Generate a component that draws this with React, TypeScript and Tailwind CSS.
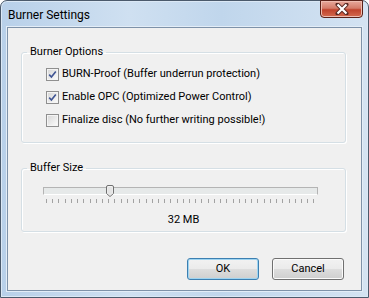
import React, { useState } from 'react';

const Checkbox: React.FC<{ checked: boolean; label: string; onToggle: () => void }> = ({ checked, label, onToggle }) => (
  <label className="flex h-[14px] cursor-default items-center gap-[3px]" onClick={onToggle}>
    <span className="flex h-[13px] w-[13px] shrink-0 items-center justify-center border border-[#8f8f8f] bg-white">
      <span className="flex h-[11px] w-[11px] items-center justify-center border border-[#f4f4f4] bg-gradient-to-br from-[#d9d9d9] to-[#f9f9f9]">
        {checked && (
          <svg width="9" height="9" viewBox="0 0 9 9">
            <path d="M1.2 4.6 L3.4 7 L7.8 1.4" fill="none" stroke="#3f5493" strokeWidth="1.6" />
          </svg>
        )}
      </span>
    </span>
    <span className="text-[11px] leading-[14px] text-black">{label}</span>
  </label>
);

const GroupBox: React.FC<{ title: string; className: string; children: React.ReactNode }> = ({ title, className, children }) => (
  <fieldset className={`rounded-[3px] border border-[#d5dfe5] shadow-[inset_1px_1px_0_#fff,1px_1px_0_#fff] ${className}`}>
    <legend className="ml-[5px] px-[3px] text-[11px] leading-[14px] text-black">{title}</legend>
    {children}
  </fieldset>
);

const Button: React.FC<{ label: string; focused?: boolean }> = ({ label, focused }) => (
  <button
    className={`h-[22px] w-[72px] rounded-[3px] border text-[11px] leading-[14px] text-black bg-[linear-gradient(#f2f2f2_0%,#ebebeb_48%,#dddddd_52%,#cfcfcf_100%)] ${
      focused ? 'border-[#3c7fb1] shadow-[inset_0_0_0_1px_#9ed4f1]' : 'border-[#707070] shadow-[inset_0_0_0_1px_#fbfbfb]'
    }`}
  >
    {label}
  </button>
);

const App: React.FC = () => {
  const [burnProof, setBurnProof] = useState(true);
  const [opc, setOpc] = useState(true);
  const [finalize, setFinalize] = useState(false);
  const ticks = Array.from({ length: 44 });

  return (
    <div className="h-[298px] w-[369px] bg-white font-['Roboto',sans-serif]">
      <div className="flex h-full w-full flex-col rounded-t-[7px] border border-[#4b5a6c] bg-[linear-gradient(90deg,#b8d0e9_0%,#cfe0f1_35%,#c0d6ec_60%,#d4e3f2_100%)] shadow-[inset_0_0_0_1px_#dbe8f5]">
        {/* Title bar */}
        <div className="flex h-[26px] items-start justify-between">
          <span className="ml-[7px] mt-[6px] text-[12px] leading-[16px] text-black">Burner Settings</span>
          <div className="mr-[5px] mt-[-1px] flex h-[18px] w-[43px] items-center justify-center rounded-b-[4px] border border-[#5a2118] bg-[linear-gradient(#e8a99c_0%,#d47c6a_45%,#c0432c_55%,#d36a4f_100%)] shadow-[inset_0_0_0_1px_#eebcb0]">
            <svg width="14" height="12" viewBox="0 0 14 12">
              <path d="M2.5 1.5 L11.5 10.5 M11.5 1.5 L2.5 10.5" stroke="#5a2a24" strokeWidth="4" strokeLinecap="round" />
              <path d="M2.5 1.5 L11.5 10.5 M11.5 1.5 L2.5 10.5" stroke="#ffffff" strokeWidth="2.2" />
            </svg>
          </div>
        </div>

        {/* Client area */}
        <div className="mx-[6px] mb-[6px] flex flex-1 flex-col border border-[#7e92a9] bg-[#f0f0f0] shadow-[0_0_0_1px_#e3edf7]">
          <GroupBox title="Burner Options" className="ml-[13px] mr-[15px] mt-[17px] h-[98px]">
            <div className="flex flex-col gap-[9px] pl-[24px] pt-[8px]">
              <Checkbox checked={burnProof} label="BURN-Proof (Buffer underrun protection)" onToggle={() => setBurnProof(!burnProof)} />
              <Checkbox checked={opc} label="Enable OPC (Optimized Power Control)" onToggle={() => setOpc(!opc)} />
              <Checkbox checked={finalize} label="Finalize disc (No further writing possible!)" onToggle={() => setFinalize(!finalize)} />
            </div>
          </GroupBox>

          <GroupBox title="Buffer Size" className="ml-[13px] mr-[15px] mt-[18px] h-[71px]">
            <div className="ml-[21px] mr-[27px] mt-[10px]">
              <div className="relative h-[12px]">
                <div className="absolute left-0 right-0 top-[2px] h-[8px] border border-[#b4b4b4] border-b-white bg-[#e6e9e9]" />
                <svg className="absolute left-[63px] top-0" width="8" height="12" viewBox="0 0 8 12">
                  <path d="M0.5 2 Q0.5 0.5 2 0.5 L6 0.5 Q7.5 0.5 7.5 2 L7.5 8.5 L4 11.5 L0.5 8.5 Z" fill="#f4f4f4" stroke="#707070" />
                  <path d="M1.5 2 L6.5 2 L6.5 8 L4 10.3 L1.5 8 Z" fill="#e4e4e4" />
                </svg>
              </div>
              <div className="mt-[2px] flex h-[4px] justify-between px-[3px]">
                {ticks.map((_, i) => (
                  <span key={i} className="h-[4px] w-px bg-[#a2a2a2]" />
                ))}
              </div>
            </div>
            <div className="mt-[10px] text-center text-[11px] leading-[14px] text-black">32 MB</div>
          </GroupBox>

          <div className="mr-[17px] mt-[26px] flex justify-end gap-[13px]">
            <Button label="OK" focused />
            <Button label="Cancel" />
          </div>
        </div>
      </div>
    </div>
  );
};

export default App;
